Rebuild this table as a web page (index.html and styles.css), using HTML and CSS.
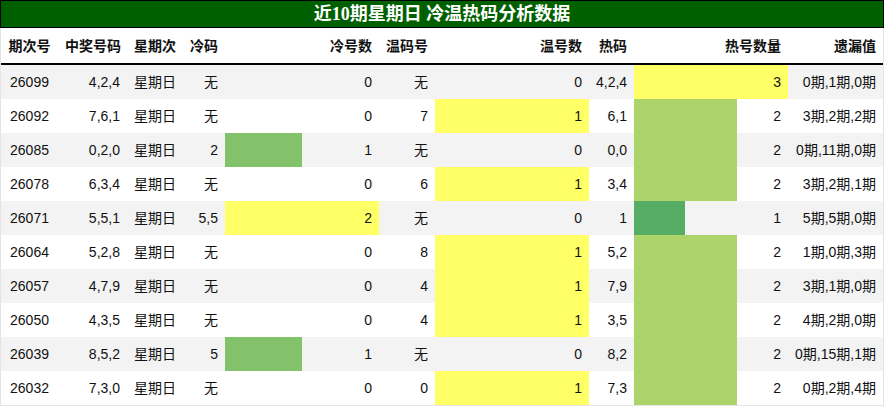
FILE: index.html
```html
<!DOCTYPE html>
<html lang="zh">
<head>
<meta charset="utf-8">
<link rel="stylesheet" href="styles.css">
</head>
<body>
<div class="panel">
  <div class="title">近10期星期日 冷温热码分析数据</div>
  <div class="table">
    <div class="row head">
      <div class="c center">期次号</div>
      <div class="c right">中奖号码</div>
      <div class="c left">星期次</div>
      <div class="c right">冷码</div>
      <div class="c right">冷号数</div>
      <div class="c right">温码号</div>
      <div class="c right">温号数</div>
      <div class="c right">热码</div>
      <div class="c right">热号数量</div>
      <div class="c right">遗漏值</div>
    </div>

    <div class="row odd">
      <div class="c center">26099</div><div class="c right">4,2,4</div><div class="c left">星期日</div><div class="c right">无</div>
      <div class="bc"><div class="bar" style="width:0%"></div><div class="num">0</div></div>
      <div class="c right">无</div>
      <div class="bc"><div class="bar" style="width:0%"></div><div class="num">0</div></div>
      <div class="c right">4,2,4</div>
      <div class="bc"><div class="bar yellow" style="width:100%"></div><div class="num">3</div></div>
      <div class="c right">0期,1期,0期</div>
    </div>

    <div class="row">
      <div class="c center">26092</div><div class="c right">7,6,1</div><div class="c left">星期日</div><div class="c right">无</div>
      <div class="bc"><div class="bar" style="width:0%"></div><div class="num">0</div></div>
      <div class="c right">7</div>
      <div class="bc"><div class="bar yellow" style="width:100%"></div><div class="num">1</div></div>
      <div class="c right">6,1</div>
      <div class="bc"><div class="bar lgreen" style="width:66.67%"></div><div class="num">2</div></div>
      <div class="c right">3期,2期,2期</div>
    </div>

    <div class="row odd">
      <div class="c center">26085</div><div class="c right">0,2,0</div><div class="c left">星期日</div><div class="c right">2</div>
      <div class="bc"><div class="bar mgreen" style="width:50%"></div><div class="num">1</div></div>
      <div class="c right">无</div>
      <div class="bc"><div class="bar" style="width:0%"></div><div class="num">0</div></div>
      <div class="c right">0,0</div>
      <div class="bc"><div class="bar lgreen" style="width:66.67%"></div><div class="num">2</div></div>
      <div class="c right">0期,11期,0期</div>
    </div>

    <div class="row">
      <div class="c center">26078</div><div class="c right">6,3,4</div><div class="c left">星期日</div><div class="c right">无</div>
      <div class="bc"><div class="bar" style="width:0%"></div><div class="num">0</div></div>
      <div class="c right">6</div>
      <div class="bc"><div class="bar yellow" style="width:100%"></div><div class="num">1</div></div>
      <div class="c right">3,4</div>
      <div class="bc"><div class="bar lgreen" style="width:66.67%"></div><div class="num">2</div></div>
      <div class="c right">3期,2期,1期</div>
    </div>

    <div class="row odd">
      <div class="c center">26071</div><div class="c right">5,5,1</div><div class="c left">星期日</div><div class="c right">5,5</div>
      <div class="bc"><div class="bar yellow" style="width:100%"></div><div class="num">2</div></div>
      <div class="c right">无</div>
      <div class="bc"><div class="bar" style="width:0%"></div><div class="num">0</div></div>
      <div class="c right">1</div>
      <div class="bc"><div class="bar dgreen" style="width:33.33%"></div><div class="num">1</div></div>
      <div class="c right">5期,5期,0期</div>
    </div>

    <div class="row">
      <div class="c center">26064</div><div class="c right">5,2,8</div><div class="c left">星期日</div><div class="c right">无</div>
      <div class="bc"><div class="bar" style="width:0%"></div><div class="num">0</div></div>
      <div class="c right">8</div>
      <div class="bc"><div class="bar yellow" style="width:100%"></div><div class="num">1</div></div>
      <div class="c right">5,2</div>
      <div class="bc"><div class="bar lgreen" style="width:66.67%"></div><div class="num">2</div></div>
      <div class="c right">1期,0期,3期</div>
    </div>

    <div class="row odd">
      <div class="c center">26057</div><div class="c right">4,7,9</div><div class="c left">星期日</div><div class="c right">无</div>
      <div class="bc"><div class="bar" style="width:0%"></div><div class="num">0</div></div>
      <div class="c right">4</div>
      <div class="bc"><div class="bar yellow" style="width:100%"></div><div class="num">1</div></div>
      <div class="c right">7,9</div>
      <div class="bc"><div class="bar lgreen" style="width:66.67%"></div><div class="num">2</div></div>
      <div class="c right">3期,1期,0期</div>
    </div>

    <div class="row">
      <div class="c center">26050</div><div class="c right">4,3,5</div><div class="c left">星期日</div><div class="c right">无</div>
      <div class="bc"><div class="bar" style="width:0%"></div><div class="num">0</div></div>
      <div class="c right">4</div>
      <div class="bc"><div class="bar yellow" style="width:100%"></div><div class="num">1</div></div>
      <div class="c right">3,5</div>
      <div class="bc"><div class="bar lgreen" style="width:66.67%"></div><div class="num">2</div></div>
      <div class="c right">4期,2期,0期</div>
    </div>

    <div class="row odd">
      <div class="c center">26039</div><div class="c right">8,5,2</div><div class="c left">星期日</div><div class="c right">5</div>
      <div class="bc"><div class="bar mgreen" style="width:50%"></div><div class="num">1</div></div>
      <div class="c right">无</div>
      <div class="bc"><div class="bar" style="width:0%"></div><div class="num">0</div></div>
      <div class="c right">8,2</div>
      <div class="bc"><div class="bar lgreen" style="width:66.67%"></div><div class="num">2</div></div>
      <div class="c right">0期,15期,1期</div>
    </div>

    <div class="row">
      <div class="c center">26032</div><div class="c right">7,3,0</div><div class="c left">星期日</div><div class="c right">无</div>
      <div class="bc"><div class="bar" style="width:0%"></div><div class="num">0</div></div>
      <div class="c right">0</div>
      <div class="bc"><div class="bar yellow" style="width:100%"></div><div class="num">1</div></div>
      <div class="c right">7,3</div>
      <div class="bc"><div class="bar lgreen" style="width:66.67%"></div><div class="num">2</div></div>
      <div class="c right">0期,2期,4期</div>
    </div>
  </div>
</div>
</body>
</html>
```

FILE: styles.css
```css
* { box-sizing: border-box; }
html, body { margin: 0; padding: 0; background: #fff; }
body {
  font-family: "Liberation Sans", "Noto Sans CJK SC", sans-serif;
  font-size: 14px;
  color: #111;
}
.panel { width: 884px; }
.title {
  height: 28px;
  background: #006000;
  border: 1px solid #000;
  color: #fff;
  font-family: "Liberation Serif", "Noto Sans CJK SC", serif;
  font-weight: bold;
  font-size: 18px;
  line-height: 26px;
  text-align: center;
}
.table {
  border-left: 1px solid #e4e4e4;
  border-right: 1px solid #e4e4e4;
  border-bottom: 1px solid #e4e4e4;
}
.row {
  display: grid;
  grid-template-columns: 57px 69px 56px 42px 154px 56px 154px 45px 154px 95px;
  height: 34px;
  line-height: 34px;
  background: #fff;
}
.row.odd { background: #f3f3f3; }
.row.head {
  height: 37px;
  line-height: 37px;
  font-weight: bold;
  border-bottom: 2px solid #000;
  padding-top: 2px;
  line-height: 33px;
}
.c { padding: 0 7px; white-space: nowrap; }
.center { text-align: center; }
.right { text-align: right; }
.left { text-align: left; }
.bc {
  display: grid;
  grid-template-columns: 100%;
}
.bar, .num { grid-area: 1 / 1; }
.bar { height: 34px; justify-self: start; }
.num { justify-self: end; padding-right: 7px; }
.yellow { background: #ffff66; }
.lgreen { background: #add46a; }
.mgreen { background: #82c26a; }
.dgreen { background: #57ad66; }
```
